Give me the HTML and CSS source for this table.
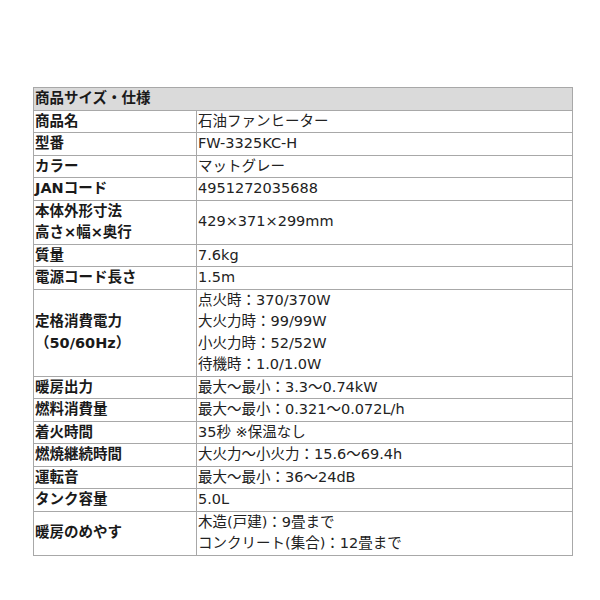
FILE: index.html
```html
<!DOCTYPE html>
<html lang="ja">
<head>
<meta charset="utf-8">
<link rel="stylesheet" href="styles.css">
</head>
<body>
<div class="page">
<table class="spec">
  <tr><th class="head" colspan="2">商品サイズ・仕様</th></tr>
  <tr><th>商品名</th><td>石油ファンヒーター</td></tr>
  <tr><th>型番</th><td>FW-3325KC-H</td></tr>
  <tr><th>カラー</th><td>マットグレー</td></tr>
  <tr><th>JANコード</th><td>4951272035688</td></tr>
  <tr><th>本体外形寸法<br>高さ×幅×奥行</th><td>429×371×299mm</td></tr>
  <tr><th>質量</th><td>7.6kg</td></tr>
  <tr><th>電源コード長さ</th><td>1.5m</td></tr>
  <tr><th>定格消費電力<br>（50/60Hz）</th><td>点火時：370/370W<br>大火力時：99/99W<br>小火力時：52/52W<br>待機時：1.0/1.0W</td></tr>
  <tr><th>暖房出力</th><td>最大～最小：3.3～0.74kW</td></tr>
  <tr><th>燃料消費量</th><td>最大～最小：0.321～0.072L/h</td></tr>
  <tr><th>着火時間</th><td>35秒 ※保温なし</td></tr>
  <tr><th>燃焼継続時間</th><td>大火力～小火力：15.6～69.4h</td></tr>
  <tr><th>運転音</th><td>最大～最小：36～24dB</td></tr>
  <tr><th>タンク容量</th><td>5.0L</td></tr>
  <tr><th>暖房のめやす</th><td>木造(戸建)：9畳まで<br>コンクリート(集合)：12畳まで</td></tr>
</table>
</div>
</body>
</html>
```
FILE: styles.css
```css
html, body {
  margin: 0;
  padding: 0;
  background: #ffffff;
}
.page {
  padding: 87px 0 0 33px;
}
.spec {
  width: 540px;
  border-collapse: collapse;
  font-family: "DejaVu Sans", "Noto Sans CJK JP", sans-serif;
  font-size: 14.5px;
  line-height: 21.5px;
  color: #222222;
}
.spec th,
.spec td {
  border: 1px solid #a8a8a8;
  padding: 0 1px;
  text-align: left;
  vertical-align: middle;
  white-space: nowrap;
}
.spec th {
  width: 160px;
  font-weight: bold;
  color: #1a1a1a;
}
.spec td {
  font-weight: normal;
}
.spec th.head {
  background: #dadada;
}
```
